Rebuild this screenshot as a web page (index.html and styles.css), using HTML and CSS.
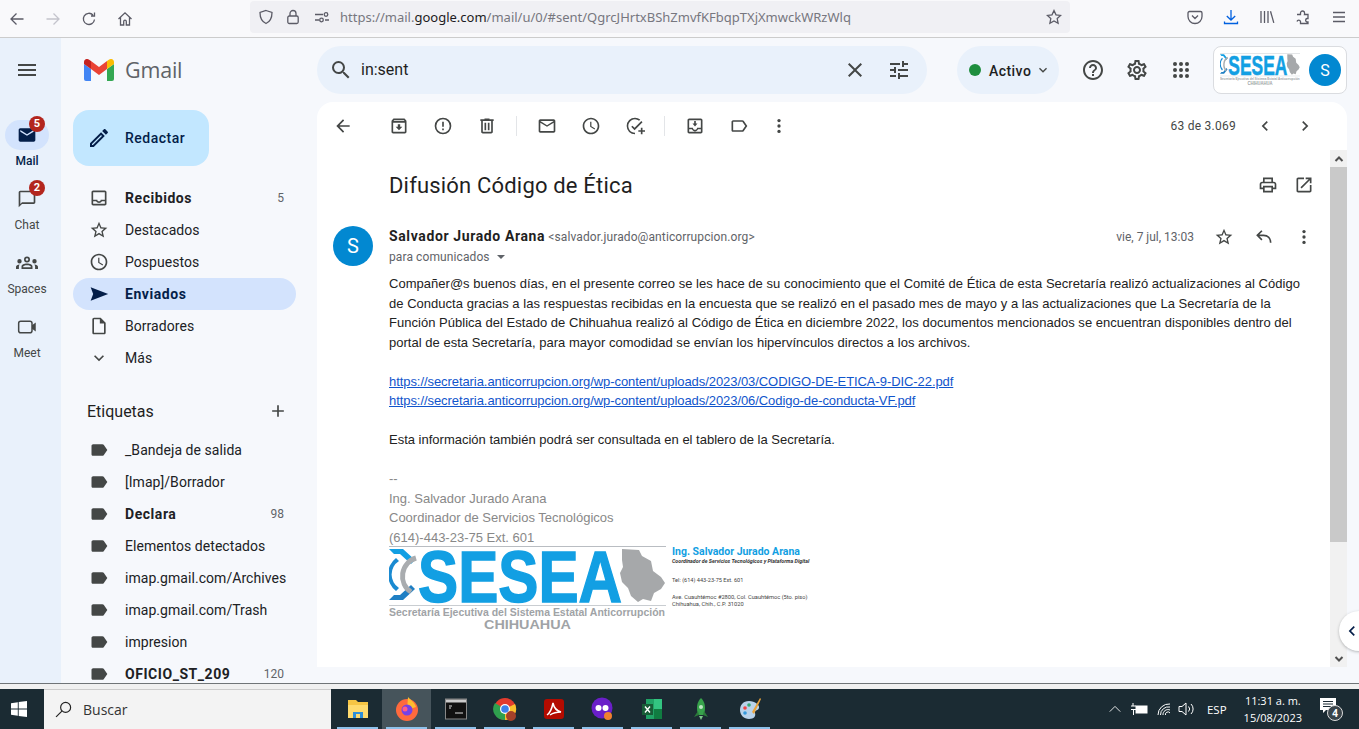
FILE: index.html
```html
<!DOCTYPE html>
<html lang="es">
<head>
<meta charset="utf-8">
<title>Difusión Código de Ética - Gmail</title>
<link rel="stylesheet" href="styles.css">
</head>
<body>
<svg class="defs" width="0" height="0">
  <symbol id="lab" viewBox="0 0 24 24"><path d="M17.63 5.84C17.27 5.33 16.67 5 16 5L5 5.01C3.9 5.01 3 5.9 3 7v10c0 1.1.9 1.99 2 1.99L16 19c.67 0 1.27-.33 1.63-.84L22 12l-4.37-6.16z"/></symbol>
  <symbol id="star" viewBox="0 0 24 24"><path d="M22 9.24l-7.19-.62L12 2 9.19 8.63 2 9.24l5.46 4.73L5.82 21 12 17.27 18.18 21l-1.63-7.03L22 9.24zM12 15.4l-3.76 2.27 1-4.28-3.32-2.88 4.38-.38L12 6.1l1.71 4.04 4.38.38-3.32 2.88 1 4.28L12 15.4z"/></symbol>
  <symbol id="dots" viewBox="0 0 24 24"><circle cx="12" cy="5.5" r="2"/><circle cx="12" cy="12" r="2"/><circle cx="12" cy="18.5" r="2"/></symbol>
  <symbol id="emblem" viewBox="0 0 277 88" preserveAspectRatio="none">
    <rect x="0" y="0" width="277" height="1" fill="#b9bdc2"/>
    <rect x="0" y="59" width="277" height="1" fill="#c9cdd1"/>
    <path d="M0 3h14l12 11-4 4L11 8H5z" fill="#129fe3"/>
    <path d="M0 54h14l12-11-4-4-11 10H5z" fill="#1f7fc4"/>
    <path d="M7 12a21 21 0 0 0 0 33l3-3a16 16 0 0 1 0-27z" fill="#1a8ad1"/>
    <path d="M27 12a19 19 0 0 0-5 34" fill="none" stroke="#a9acaf" stroke-width="5"/>
    <path d="M233 3l17 1 3 6 9 5 2 10 8 6 4 6-4 6-7 4-3 8-8-2-5 3-7-6-3-8-6-6-2-9 3-6-1-7z" fill="#a6a8aa"/>
  </symbol>
</svg>

<header class="browser">
  <div class="b-left">
    <svg class="b-ico" viewBox="0 0 16 16"><path d="M14.5 8H2M7.5 2.5 2 8l5.5 5.5"/></svg>
    <svg class="b-ico faint" viewBox="0 0 16 16"><path d="M1.5 8H14M8.5 2.5 14 8l-5.500 5.500"/></svg>
    <svg class="b-ico" viewBox="0 0 16 16"><path d="M13.500 8.500A5.600 5.600 0 1 1 12 4M13.500 1.500V5H10"/></svg>
    <svg class="b-ico" viewBox="0 0 16 16"><path d="M1.500 8 8 1.800 14.500 8M3.500 6.500V14h3.200v-3.500a1.300 1.300 0 0 1 2.600 0V14h3.200V6.500"/></svg>
  </div>
  <div class="urlbar">
    <svg class="b-ico u1" viewBox="0 0 16 16"><path d="M8 1.500 14 3.500c0 5-1.500 9-6 11-4.500-2-6-6-6-11z"/></svg>
    <svg class="b-ico u2" viewBox="0 0 16 16"><rect x="2.800" y="7" width="10.400" height="7.500" rx="1.500"/><path d="M5 7V4.500a3 3 0 0 1 6 0V7"/></svg>
    <svg class="b-ico u3" viewBox="0 0 16 16"><path d="M1 5.500h8M1 11h4M11 11h4"/><circle cx="12" cy="5.500" r="1.800"/><circle cx="7.500" cy="11" r="1.800"/></svg>
    <span class="url">https://mail.<b>google.com</b>/mail/u/0/#sent/QgrcJHrtxBShZmvfKFbqpTXjXmwckWRzWlq</span>
    <svg class="b-ico" viewBox="0 0 16 16"><path d="M8 1.500l2 4.300 4.600.6-3.400 3.200.9 4.700L8 12l-4.100 2.300.9-4.700L1.400 6.400 6 5.800z"/></svg>
  </div>
  <div class="b-right">
    <svg class="b-ico" viewBox="0 0 16 16"><path d="M2.500 2.500h11A1.500 1.500 0 0 1 15 4v3.500a7 7 0 0 1-14 0V4a1.500 1.500 0 0 1 1.500-1.500zM5 6.500l3 3 3-3"/></svg>
    <svg class="b-ico blue" viewBox="0 0 16 16"><path d="M8 1v10M3.800 7 8 11l4.200-4M1.500 12.500v2h13v-2"/></svg>
    <svg class="b-ico" viewBox="0 0 16 16"><path d="M2 2v12M5.500 2v12M9 2v12M11.500 2.200l3.300 11.700"/></svg>
    <svg class="b-ico" viewBox="0 0 16 16"><path d="M2 5.500h3.500V4a2 2 0 0 1 4 0 2 2 0 0 1 0 1.500H13v4h-1a1.800 1.800 0 0 0 0 3.500h1v1.500H5.500v-2a1.800 1.800 0 0 0-3.500 0"/></svg>
    <svg class="b-ico" viewBox="0 0 16 16"><path d="M2 3.500h12M2 8h12M2 12.500h12"/></svg>
  </div>
</header>

<div class="app">
  <nav class="rail">
    <div class="rail-menu"><svg class="ic i24" viewBox="0 0 24 24"><path d="M3 18h18v-2H3v2zm0-5h18v-2H3v2zm0-7v2h18V6H3z"/></svg></div>
    <div class="rail-item active">
      <div class="rail-ico"><svg class="ic navy i20" viewBox="0 0 24 24"><path d="M20 4H4c-1.100 0-2 .9-2 2v12c0 1.100.9 2 2 2h16c1.100 0 2-.9 2-2V6c0-1.100-.9-2-2-2zm0 4l-8 5-8-5V6l8 5 8-5v2z"/></svg><span class="badge">5</span></div>
      <span class="rail-text">Mail</span>
    </div>
    <div class="rail-item">
      <div class="rail-ico"><svg class="ic i20" viewBox="0 0 24 24"><path d="M20 2H4c-1.100 0-2 .9-2 2v18l4-4h14c1.100 0 2-.9 2-2V4c0-1.100-.9-2-2-2zm0 14H6l-2 2V4h16v12z"/></svg><span class="badge">2</span></div>
      <span class="rail-text">Chat</span>
    </div>
    <div class="rail-item">
      <div class="rail-ico"><svg class="ic i24" viewBox="0 0 24 24"><path d="M12 5.500a3 3 0 1 1 0 6 3 3 0 0 1 0-6zm0 1.700a1.300 1.300 0 1 0 0 2.600 1.300 1.300 0 0 0 0-2.600zM4.500 8a2.200 2.200 0 1 1 0 4.400 2.200 2.200 0 0 1 0-4.400zm15 0a2.200 2.200 0 1 1 0 4.400 2.200 2.200 0 0 1 0-4.400zM12 12.500c3 0 5.500 1.200 5.500 3V18h-11v-2.500c0-1.800 2.500-3 5.500-3zm0 1.700c-2.200 0-3.800.7-3.800 1.400v.7h7.600v-.7c0-.7-1.600-1.400-3.800-1.400zM1 18v-2.200c0-1.400 1.500-2.300 3.700-2.400-.5.600-.8 1.300-.8 2.100V18zm22 0h-2.900v-2.500c0-.8-.3-1.500-.8-2.100 2.200.1 3.700 1 3.700 2.400z"/></svg></div>
      <span class="rail-text">Spaces</span>
    </div>
    <div class="rail-item">
      <div class="rail-ico"><svg class="ic i20" viewBox="0 0 24 24"><rect class="meet-box" x="2" y="5" width="16" height="14" rx="2.500"/><path d="M18 10l4.500-3.500v11L18 14z"/></svg></div>
      <span class="rail-text">Meet</span>
    </div>
  </nav>

  <aside class="side">
    <div class="brand">
      <svg class="gm" viewBox="0 0 30 22"><path d="M2 22h5V10L0 5v15a2 2 0 0 0 2 2z" fill="#4285f4"/><path d="M23 22h5a2 2 0 0 0 2-2V5l-7 5z" fill="#34a853"/><path d="M23 2v8l7-5V3c0-2.500-2.800-3.900-4.800-2.400z" fill="#fbbc04"/><path d="M7 10V2l8 6 8-6v8l-8 6z" fill="#ea4335"/><path d="M0 3v2l7 5V2L4.800.6C2.800-.9 0 .5 0 3z" fill="#c5221f"/></svg>
      <span class="brand-name">Gmail</span>
    </div>
    <div class="compose">
      <svg class="ic ink i24" viewBox="0 0 24 24"><path d="M3 17.250V21h3.750L17.810 9.940l-3.750-3.750L3 17.250zM5.920 19H5v-.92l9.060-9.060.92.92L5.920 19zM20.710 5.630l-2.340-2.340c-.2-.2-.45-.29-.71-.29s-.51.1-.7.29l-1.830 1.830 3.750 3.750 1.830-1.830c.39-.39.39-1.020 0-1.410z"/></svg>
      <span>Redactar</span>
    </div>
    <ul class="nav">
      <li class="row strong"><svg class="ic i20" viewBox="0 0 24 24"><path d="M19 3H5c-1.100 0-2 .9-2 2v14c0 1.100.9 2 2 2h14c1.100 0 2-.9 2-2V5c0-1.100-.9-2-2-2zm0 16H5v-3h3.560c.69 1.190 1.970 2 3.450 2s2.750-.81 3.450-2H19v3zm0-5h-4.990c0 1.100-.9 2-2 2s-2-.9-2-2H5V5h14v9z"/></svg><span class="lbl">Recibidos</span><span class="cnt">5</span></li>
      <li class="row"><svg class="ic i20" viewBox="0 0 24 24"><use href="#star"/></svg><span class="lbl">Destacados</span></li>
      <li class="row"><svg class="ic i20" viewBox="0 0 24 24"><path d="M11.990 2C6.470 2 2 6.480 2 12s4.470 10 9.990 10C17.520 22 22 17.520 22 12S17.520 2 11.990 2zM12 20c-4.420 0-8-3.580-8-8s3.580-8 8-8 8 3.580 8 8-3.580 8-8 8zm.5-13H11v6l5.250 3.150.75-1.230-4.500-2.670z"/></svg><span class="lbl">Pospuestos</span></li>
      <li class="row sel"><svg class="ic navy i20" viewBox="0 0 24 24"><path d="M2 20l3-8-3-8 21 8z"/></svg><span class="lbl">Enviados</span></li>
      <li class="row"><svg class="ic i20" viewBox="0 0 24 24"><path d="M14 2H6c-1.100 0-2 .9-2 2v16c0 1.100.9 2 2 2h12c1.100 0 2-.9 2-2V8l-6-6zM6 20V4h7v5h5v11H6z"/></svg><span class="lbl">Borradores</span></li>
      <li class="row"><svg class="ic i20" viewBox="0 0 24 24"><path d="M16.590 8.590L12 13.170 7.410 8.590 6 10l6 6 6-6z"/></svg><span class="lbl">Más</span></li>
    </ul>
    <div class="tags-head"><span>Etiquetas</span><svg class="ic i20" viewBox="0 0 24 24"><path d="M19 13h-6v6h-2v-6H5v-2h6V5h2v6h6v2z"/></svg></div>
    <ul class="nav">
      <li class="row"><svg class="ic tag i20"><use href="#lab"/></svg><span class="lbl">_Bandeja de salida</span></li>
      <li class="row"><svg class="ic tag i20"><use href="#lab"/></svg><span class="lbl">[Imap]/Borrador</span></li>
      <li class="row strong"><svg class="ic tag i20"><use href="#lab"/></svg><span class="lbl">Declara</span><span class="cnt">98</span></li>
      <li class="row"><svg class="ic tag i20"><use href="#lab"/></svg><span class="lbl">Elementos detectados</span></li>
      <li class="row"><svg class="ic tag i20"><use href="#lab"/></svg><span class="lbl">imap.gmail.com/Archives</span></li>
      <li class="row"><svg class="ic tag i20"><use href="#lab"/></svg><span class="lbl">imap.gmail.com/Trash</span></li>
      <li class="row"><svg class="ic tag i20"><use href="#lab"/></svg><span class="lbl">impresion</span></li>
      <li class="row strong"><svg class="ic tag i20"><use href="#lab"/></svg><span class="lbl">OFICIO_ST_209</span><span class="cnt">120</span></li>
    </ul>
  </aside>

  <main class="main">
    <div class="top">
      <div class="search">
        <svg class="ic ink2 i24" viewBox="0 0 24 24"><path d="M15.500 14h-.79l-.28-.27A6.471 6.471 0 0 0 16 9.500 6.500 6.500 0 1 0 9.500 16c1.610 0 3.090-.59 4.230-1.570l.27.28v.79l5 4.990L20.490 19l-4.990-5zm-6 0C7.010 14 5 11.990 5 9.500S7.010 5 9.500 5 14 7.010 14 9.500 11.990 14 9.500 14z"/></svg>
        <span class="q">in:sent</span>
        <svg class="ic ink2 i24" viewBox="0 0 24 24"><path d="M19 6.410L17.590 5 12 10.590 6.410 5 5 6.410 10.590 12 5 17.590 6.410 19 12 13.410 17.590 19 19 17.590 13.410 12z"/></svg>
        <svg class="ic ink2 i24" viewBox="0 0 24 24"><path d="M3 17v2h6v-2H3zM3 5v2h10V5H3zm10 16v-2h8v-2h-8v-2h-2v6h2zM7 9v2H3v2h4v2h2V9H7zm14 4v-2H11v2h10zm-6-4h2V7h4V5h-4V3h-2v6z"/></svg>
      </div>
      <div class="status"><i class="dot"></i><span>Activo</span><svg class="ic i16" viewBox="0 0 24 24"><path d="M16.590 8.590L12 13.170 7.410 8.590 6 10l6 6 6-6z"/></svg></div>
      <div class="tools">
        <svg class="ic i24" viewBox="0 0 24 24"><path d="M11 18h2v-2h-2v2zm1-16C6.480 2 2 6.480 2 12s4.480 10 10 10 10-4.480 10-10S17.520 2 12 2zm0 18c-4.410 0-8-3.590-8-8s3.590-8 8-8 8 3.590 8 8-3.590 8-8 8zm0-14c-2.210 0-4 1.790-4 4h2c0-1.100.9-2 2-2s2 .9 2 2c0 2-3 1.750-3 5h2c0-2.250 3-2.500 3-5 0-2.210-1.790-4-4-4z"/></svg>
        <svg class="ic i24" viewBox="0 0 24 24"><path d="M19.430 12.980c.04-.32.07-.64.07-.98 0-.34-.03-.66-.07-.98l2.110-1.650c.19-.15.24-.42.12-.64l-2-3.460c-.09-.16-.26-.25-.44-.25-.06 0-.12.01-.17.03l-2.490 1c-.52-.4-1.080-.73-1.690-.98l-.38-2.650C14.460 2.180 14.250 2 14 2h-4c-.25 0-.46.18-.49.42l-.38 2.650c-.61.25-1.170.59-1.690.98l-2.490-1c-.06-.02-.12-.03-.18-.03-.17 0-.34.09-.43.25l-2 3.460c-.13.22-.07.49.12.64l2.110 1.650c-.04.32-.07.65-.07.98 0 .33.03.66.07.98l-2.110 1.650c-.19.15-.24.42-.12.64l2 3.460c.09.16.26.25.44.25.06 0 .12-.01.17-.03l2.490-1c.52.4 1.080.73 1.690.98l.38 2.650c.03.24.24.42.49.42h4c.25 0 .46-.18.49-.42l.38-2.650c.61-.25 1.170-.59 1.690-.98l2.490 1c.06.02.12.03.18.03.17 0 .34-.09.43-.25l2-3.460c.12-.22.07-.49-.12-.64l-2.110-1.650zm-1.980-1.710c.04.31.05.52.05.73 0 .21-.02.43-.05.73l-.14 1.130.89.7 1.080.84-.7 1.210-1.270-.51-1.040-.42-.9.68c-.43.32-.84.56-1.250.73l-1.060.43-.16 1.130-.2 1.350h-1.400l-.19-1.350-.16-1.130-1.060-.43c-.43-.18-.83-.41-1.230-.71l-.91-.7-1.060.43-1.270.51-.7-1.210 1.080-.84.89-.7-.14-1.130c-.03-.31-.05-.54-.05-.74s.02-.43.05-.73l.14-1.130-.89-.7-1.080-.84.7-1.210 1.270.51 1.040.42.9-.68c.43-.32.84-.56 1.250-.73l1.060-.43.16-1.130.2-1.350h1.390l.19 1.350.16 1.130 1.060.43c.43.18.83.41 1.230.71l.91.7 1.060-.43 1.270-.51.7 1.210-1.070.85-.89.7.14 1.130zM12 8c-2.210 0-4 1.790-4 4s1.790 4 4 4 4-1.790 4-4-1.790-4-4-4zm0 6c-1.100 0-2-.9-2-2s.9-2 2-2 2 .9 2 2-.9 2-2 2z"/></svg>
        <svg class="ic i24" viewBox="0 0 24 24"><circle cx="6" cy="6" r="2"/><circle cx="12" cy="6" r="2"/><circle cx="18" cy="6" r="2"/><circle cx="6" cy="12" r="2"/><circle cx="12" cy="12" r="2"/><circle cx="18" cy="12" r="2"/><circle cx="6" cy="18" r="2"/><circle cx="12" cy="18" r="2"/><circle cx="18" cy="18" r="2"/></svg>
      </div>
      <div class="account">
        <svg class="acc-logo" viewBox="0 0 277 88" preserveAspectRatio="none">
          <use href="#emblem"/>
          <text x="29" y="56" class="lg-word" textLength="204" lengthAdjust="spacingAndGlyphs">SESEA</text>
          <text x="0" y="70" class="lg-sub" textLength="276" lengthAdjust="spacingAndGlyphs">Secretaría Ejecutiva del Sistema Estatal Anticorrupción</text>
          <text x="95" y="83" class="lg-city" textLength="87" lengthAdjust="spacingAndGlyphs">CHIHUAHUA</text>
        </svg>
        <span class="avatar small">S</span>
      </div>
    </div>

    <section class="card">
      <div class="toolbar">
        <svg class="ic i20 tb-back" viewBox="0 0 24 24"><path d="M20 11H7.830l5.590-5.590L12 4l-8 8 8 8 1.410-1.410L7.830 13H20v-2z"/></svg>
        <div class="tb-group">
          <svg class="ic i20" viewBox="0 0 24 24"><path d="M20.540 5.230l-1.390-1.680C18.880 3.210 18.470 3 18 3H6c-.47 0-.88.21-1.160.55L3.460 5.230C3.170 5.570 3 6.020 3 6.500V19c0 1.100.9 2 2 2h14c1.100 0 2-.9 2-2V6.500c0-.48-.17-.93-.46-1.270zM6.240 5h11.520l.83 1H5.420l.82-1zM5 19V8h14v11H5zm8.450-9h-2.900v3H8l4 4 4-4h-2.550z"/></svg>
          <svg class="ic i20" viewBox="0 0 24 24"><path d="M12 2a10 10 0 1 1 0 20 10 10 0 0 1 0-20zm0 2a8 8 0 1 0 0 16 8 8 0 0 0 0-16zm-1 3h2v6h-2zm0 8h2v2h-2z"/></svg>
          <svg class="ic i20" viewBox="0 0 24 24"><path d="M15 4V3H9v1H4v2h1v13c0 1.100.9 2 2 2h10c1.100 0 2-.9 2-2V6h1V4h-5zm2 15H7V6h10v13zM9 8h2v9H9zm4 0h2v9h-2z"/></svg>
        </div>
        <i class="tb-sep"></i>
        <div class="tb-group">
          <svg class="ic i20" viewBox="0 0 24 24"><path d="M20 4H4c-1.100 0-2 .9-2 2v12c0 1.100.9 2 2 2h16c1.100 0 2-.9 2-2V6c0-1.100-.9-2-2-2zm0 14H4V8l8 5 8-5v10zm-8-7L4 6h16l-8 5z"/></svg>
          <svg class="ic i20" viewBox="0 0 24 24"><path d="M11.990 2C6.470 2 2 6.480 2 12s4.470 10 9.990 10C17.520 22 22 17.520 22 12S17.520 2 11.990 2zM12 20c-4.420 0-8-3.580-8-8s3.580-8 8-8 8 3.580 8 8-3.580 8-8 8zm.5-13H11v6l5.250 3.150.75-1.230-4.500-2.670z"/></svg>
          <svg class="ic i20" viewBox="0 0 24 24"><path d="M21 7.500l-9.500 9.500-4-4 1.400-1.400 2.600 2.600 8.100-8.100zM12 2a10 10 0 0 1 6.300 2.200l-1.400 1.500A8 8 0 1 0 12 20v2a10 10 0 0 1 0-20zm7 12h2v3h3v2h-3v3h-2v-3h-3v-2h3z"/></svg>
        </div>
        <i class="tb-sep"></i>
        <div class="tb-group">
          <svg class="ic i20" viewBox="0 0 24 24"><path d="M19 3H5c-1.100 0-2 .9-2 2v14c0 1.100.9 2 2 2h14c1.100 0 2-.9 2-2V5c0-1.100-.9-2-2-2zm0 2v9h-4.500c0 1.400-1.100 2.500-2.500 2.500S9.500 15.400 9.500 14H5V5zM5 19v-3h3.300c.7 1.200 2.100 2.500 3.700 2.500s3-1.300 3.700-2.500H19v3zM11 6h2v3h2l-3 3.500L9 9h2z"/></svg>
          <svg class="ic i20" viewBox="0 0 24 24"><path d="M17.630 5.840C17.270 5.330 16.670 5 16 5L5 5.010C3.900 5.010 3 5.900 3 7v10c0 1.100.9 1.990 2 1.990L16 19c.67 0 1.270-.33 1.630-.84L22 12l-4.370-6.160zM16 17H5V7h11l3.550 5L16 17z"/></svg>
          <svg class="ic i20 tb-more"><use href="#dots"/></svg>
        </div>
        <span class="pager">63 de 3.069</span>
        <svg class="ic i20" viewBox="0 0 24 24"><path d="M15.410 7.410L14 6l-6 6 6 6 1.410-1.410L10.830 12z"/></svg>
        <svg class="ic i20 tb-next" viewBox="0 0 24 24"><path d="M10 6L8.590 7.410 13.170 12l-4.580 4.590L10 18l6-6z"/></svg>
      </div>

      <div class="body-wrap">
        <div class="thread">
          <div class="subject-row">
            <h1 class="subject">Difusión Código de Ética</h1>
            <svg class="ic i20" viewBox="0 0 24 24"><path d="M19 8h-1V3H6v5H5c-1.660 0-3 1.340-3 3v6h4v4h12v-4h4v-6c0-1.660-1.340-3-3-3zM8 5h8v3H8V5zm8 12v2H8v-4h8v2zm2-2v-2H6v2H4v-4c0-.55.45-1 1-1h14c.55 0 1 .45 1 1v4h-2z"/></svg>
            <svg class="ic i20" viewBox="0 0 24 24"><path d="M19 19H5V5h7V3H5c-1.110 0-2 .9-2 2v14c0 1.100.89 2 2 2h14c1.100 0 2-.9 2-2v-7h-2v7zM14 3v2h3.590l-9.830 9.830 1.410 1.410L19 6.410V10h2V3h-7z"/></svg>
          </div>
          <div class="msg">
            <span class="avatar">S</span>
            <div class="msg-col">
              <div class="msg-head">
                <div class="who">
                  <div class="from"><b>Salvador Jurado Arana</b> <span>&lt;salvador.jurado@anticorrupcion.org&gt;</span></div>
                  <div class="to">para comunicados <i class="caret"></i></div>
                </div>
                <span class="date">vie, 7 jul, 13:03</span>
                <svg class="ic i20" viewBox="0 0 24 24"><use href="#star"/></svg>
                <svg class="ic i20 reply" viewBox="0 0 24 24"><path d="M9.500 4.500 4 10l5.500 5.500M4 10h7.500c5 0 8.500 3.500 8.500 9"/></svg>
                <svg class="ic i20"><use href="#dots"/></svg>
              </div>
              <div class="text">
                <p class="para">Compañer@s buenos días, en el presente correo se les hace de su conocimiento que el Comité de Ética de esta Secretaría realizó actualizaciones al Código<br>de Conducta gracias a las respuestas recibidas en la encuesta que se realizó en el pasado mes de mayo y a las actualizaciones que La Secretaría de la<br>Función Pública del Estado de Chihuahua realizó al Código de Ética en diciembre 2022, los documentos mencionados se encuentran disponibles dentro del<br>portal de esta Secretaría, para mayor comodidad se envían los hipervínculos directos a los archivos.</p>
                <p class="links"><a href="#">https://secretaria.anticorrupcion.org/wp-content/uploads/2023/03/CODIGO-DE-ETICA-9-DIC-22.pdf</a><br><a href="#">https://secretaria.anticorrupcion.org/wp-content/uploads/2023/06/Codigo-de-conducta-VF.pdf</a></p>
                <p>Esta información también podrá ser consultada en el tablero de la Secretaría.</p>
                <p class="sig">--<br>Ing. Salvador Jurado Arana<br>Coordinador de Servicios Tecnológicos<br>(614)-443-23-75 Ext. 601</p>
                <div class="sig-block">
                  <svg class="sig-logo" viewBox="0 0 277 88" preserveAspectRatio="none">
                    <use href="#emblem"/>
                    <text x="29" y="56" class="lg-word" textLength="204" lengthAdjust="spacingAndGlyphs">SESEA</text>
                    <text x="0" y="70" class="lg-sub" textLength="276" lengthAdjust="spacingAndGlyphs">Secretaría Ejecutiva del Sistema Estatal Anticorrupción</text>
                    <text x="95" y="83" class="lg-city" textLength="87" lengthAdjust="spacingAndGlyphs">CHIHUAHUA</text>
                  </svg>
                  <div class="sig-info">
                    <div class="si-name">Ing. Salvador Jurado Arana</div>
                    <div class="si-role">Coordinador de Servicios Tecnológicos y Plataforma Digital</div>
                    <div class="si-tel">Tel: (614) 443-23-75 Ext. 601</div>
                    <div class="si-addr">Ave. Cuauhtémoc #2800, Col. Cuauhtémoc (5to. piso)<br>Chihuahua, Chih., C.P. 31020</div>
                  </div>
                </div>
              </div>
            </div>
          </div>
        </div>
        <div class="scroll">
          <div class="sc-btn"><svg viewBox="0 0 12 12"><path d="M2.500 8 6 4.500 9.500 8"/></svg></div>
          <div class="sc-thumb"></div>
          <div class="sc-track"></div>
          <div class="sc-btn"><svg viewBox="0 0 12 12"><path d="M2.500 4 6 7.500 9.500 4"/></svg></div>
        </div>
      </div>
    </section>
  </main>
  <div class="expand"><svg class="ic ink i20" viewBox="0 0 24 24"><path d="M15.410 7.410L14 6l-6 6 6 6 1.410-1.410L10.830 12z"/></svg></div>
</div>

<div class="strip"></div>

<footer class="taskbar">
  <div class="start"><svg class="win" viewBox="0 0 16 16"><path d="M0 2.200 6.800 1.200V7.500H0zM7.700 1.100 16 0v7.500H7.700zM0 8.400h6.800v6.400L0 13.800zM7.700 8.400H16V16l-8.300-1.100z"/></svg></div>
  <div class="tsearch">
    <svg class="ts-ico" viewBox="0 0 16 16"><circle cx="10" cy="6" r="4.700"/><path d="M6.500 9.500 1 15"/></svg>
    <span>Buscar</span>
  </div>
  <div class="apps">
    <div class="app-i run"><svg viewBox="0 0 24 24"><path d="M2 3h8l2 2h10v16H2z" fill="#f6c544"/><rect x="2" y="8" width="20" height="13" fill="#ffdb6e"/><rect x="7" y="15" width="10" height="6" fill="#2f8fd8"/><rect x="10" y="17" width="4" height="4" fill="#ffdb6e"/></svg></div>
    <div class="app-i run cur"><svg viewBox="0 0 24 24"><circle cx="12" cy="13" r="11" fill="#ff6a3d"/><path d="M13 0c3 3 7 6 8 10l-9 3z" fill="#ffbd2e"/><circle cx="12" cy="13" r="5.500" fill="#7542e5"/><circle cx="10" cy="12" r="2.500" fill="#ff5d8a"/></svg></div>
    <div class="app-i run"><svg viewBox="0 0 24 24"><rect x="1.500" y="2" width="21" height="20" fill="#111" stroke="#888"/><rect x="2" y="2.500" width="20" height="3" fill="#ccc"/><path d="M5 9h3M5 11h2M11 16h8" stroke="#ddd" fill="none"/></svg></div>
    <div class="app-i run"><svg viewBox="0 0 24 24"><circle cx="12" cy="12" r="11" fill="#e33b2e"/><path d="M12 12 22 7A11 11 0 0 1 12 23z" fill="#fbc02d"/><path d="M12 12 12 23A11 11 0 0 1 2 6z" fill="#2fa04e"/><circle cx="12" cy="12" r="5" fill="#fff"/><circle cx="12" cy="12" r="3.800" fill="#3f81ec"/><circle cx="18" cy="19" r="5" fill="#a5412a"/></svg></div>
    <div class="app-i run"><svg viewBox="0 0 24 24"><rect x="2" y="2" width="20" height="20" rx="3" fill="#b30b00"/><path d="M5 18c3-2 5-7 6-12 1 5 4 8 8 9-4 0-8 1-11 3" fill="none" stroke="#fff" stroke-width="1.500"/></svg></div>
    <div class="app-i run"><svg viewBox="0 0 24 24"><circle cx="11" cy="11" r="10.500" fill="#6a1fc9"/><circle cx="7.500" cy="11" r="3" fill="#fff"/><circle cx="14.500" cy="11" r="3" fill="#fff"/><circle cx="17" cy="19" r="4" fill="#f08030"/></svg></div>
    <div class="app-i run"><svg viewBox="0 0 24 24"><rect x="6" y="2" width="16" height="20" fill="#21a366"/><rect x="14" y="2" width="8" height="10" fill="#33c481"/><rect x="14" y="12" width="8" height="10" fill="#107c41"/><rect x="2" y="7" width="11" height="11" fill="#185c37"/><path d="M5 9.500l5 6M10 9.500l-5 6" stroke="#fff" fill="none" stroke-width="1.400"/></svg></div>
    <div class="app-i run"><svg viewBox="0 0 24 24"><path d="M12 1c4 4 5 9 3 17H9C7 10 8 5 12 1z" fill="#37a24b"/><circle cx="12" cy="10" r="2" fill="#bfe5c4"/><path d="M9 14l-4 6 5-2zM15 14l4 6-5-2z" fill="#2c7a3b"/><path d="M10 19h4l-2 4z" fill="#7ecb8a"/></svg></div>
    <div class="app-i run"><svg viewBox="0 0 24 24"><path d="M11 4C5 4 2 8 2 13s4 9 9 9 7-3 6-6 3-2 4-5-4-7-10-7z" fill="#b9d2ea"/><circle cx="7" cy="11" r="1.800" fill="#e44"/><circle cx="11" cy="8" r="1.800" fill="#3a7"/><circle cx="7" cy="16" r="1.800" fill="#39d"/><path d="M22 1l-8 14 2 2 7-15z" fill="#e9a23b"/></svg></div>
  </div>
  <div class="tray">
    <svg class="tr chev" viewBox="0 0 16 16"><path d="M2 11 8 5l6 6"/></svg>
    <svg class="tr batt" viewBox="0 0 18 16"><rect x="6" y="5" width="11" height="7" fill="#fff"/><path d="M1 5h5M3 2v3M1 8.500h5M3.500 8v6"/></svg>
    <svg class="tr wifi" viewBox="0 0 16 16"><path d="M2 14a11 11 0 0 1 12-11M4.500 14A8 8 0 0 1 14 6M7 14a5 5 0 0 1 7-5M9.500 14A2.500 2.500 0 0 1 14 12"/></svg>
    <svg class="tr vol" viewBox="0 0 18 16"><path d="M1 5.500h3L8 2v12L4 10.500H1zM10.500 5.500a3.500 3.500 0 0 1 0 5M13 3a7 7 0 0 1 0 10"/></svg>
    <span class="lang">ESP</span>
    <div class="clock"><span>11:31 a. m.</span><span>15/08/2023</span></div>
    <div class="notif">
      <svg class="nt" viewBox="0 0 16 16"><path d="M0 0h16v12H6l-3 3v-3H0z" fill="#fff"/><path d="M3 3.500h10M3 6h10M3 8.500h10" stroke="#1b2a33"/></svg>
      <span class="nt-badge">4</span>
    </div>
  </div>
</footer>
</body>
</html>
```
FILE: styles.css
```css
* { box-sizing: border-box; }
html, body { margin: 0; height: 100%; }
body {
  width: 1359px; height: 729px; overflow: hidden;
  display: flex; flex-direction: column;
  font-family: Roboto, "Liberation Sans", sans-serif;
  color: #1f1f1f; background: #f6f8fc;
}
.defs { position: absolute; }
ul { list-style: none; margin: 0; padding: 0; }
p { margin: 0; }

.ic { fill: #444746; flex: none; display: block; }
.i16 { width: 16px; height: 16px; }
.i20 { width: 20px; height: 20px; }
.i24 { width: 24px; height: 24px; }
.navy { fill: #041e49; }
.ink { fill: #041e49; }
.ink2 { fill: #444746; }
.reply { fill: none; stroke: #444746; stroke-width: 2; }
.meet-box { fill: none; stroke: #444746; stroke-width: 1.800; }

/* Browser chrome */
.browser {
  flex: none; height: 38px; display: flex; align-items: flex-start;
  background: #f9f9fb; border-bottom: 1px solid #ccc;
}
.b-ico { width: 16px; height: 16px; fill: none; stroke: #5b5b66; stroke-width: 1.300; flex: none; }
.b-ico.faint { stroke: #c4c4cc; }
.b-ico.blue { stroke: #0060df; }
.b-left { width: 250px; height: 37px; display: flex; align-items: center; gap: 20px; padding-left: 9px; }
.urlbar {
  width: 820px; height: 32px; margin-top: 1px;
  display: flex; align-items: center; padding: 0 8px;
  background: #f0f0f4; border-radius: 4px;
}
.u1 { margin-left: 0; }
.u2 { margin-left: 11px; }
.u3 { margin-left: 13px; }
.url { flex: 1; margin-left: 10px; font: 13px "Noto Sans", sans-serif; color: #77777f; white-space: nowrap; }
.url b { font-weight: 400; color: #1c1b22; }
.b-right { flex: 1; height: 33px; display: flex; align-items: center; justify-content: flex-end; gap: 20px; padding-right: 12px; }

/* App */
.app { flex: none; height: 645px; display: flex; overflow: hidden; position: relative; }
.rail { flex: none; width: 61px; padding-right: 7px; background: #e9f1fb; display: flex; flex-direction: column; align-items: center; }
.rail-menu { height: 64px; padding-top: 20px; }
.rail-item { height: 64px; display: flex; flex-direction: column; align-items: center; }
.rail-menu + .rail-item { margin-top: 18px; }
.rail-ico { position: relative; width: 44px; height: 30px; display: flex; align-items: center; justify-content: center; border-radius: 15px; }
.active .rail-ico { background: #d3e3fd; }
.rail-text { margin-top: 3px; font-size: 12px; line-height: 16px; color: #444746; }
.active .rail-text { color: #041e49; font-weight: 500; }
.badge {
  position: absolute; top: -4px; left: 24px; width: 16px; height: 16px; border-radius: 50%;
  background: #b3261e; color: #fff; font-size: 11px; font-weight: 700; line-height: 16px; text-align: center;
}

.side { flex: none; width: 256px; padding-left: 12px; overflow: hidden; }
.brand { height: 40px; margin-top: 12px; display: flex; align-items: center; padding-left: 11px; gap: 11px; }
.gm { width: 30px; height: 22px; flex: none; }
.brand-name { font: 21.500px/1 "Open Sans", sans-serif; color: #5f6368; letter-spacing: -.2px; }
.compose {
  width: 136px; height: 56px; margin-top: 20px; border-radius: 16px; background: #c2e7ff;
  display: flex; align-items: center; gap: 14px; padding-left: 14px;
  font-size: 14px; font-weight: 500; color: #041e49; letter-spacing: .5px;
}
.nav { width: 223px; }
.side > .nav:first-of-type { margin-top: 16px; }
.row { height: 32px; display: flex; align-items: center; padding: 0 12px 0 16px; border-radius: 16px; font-size: 14px; color: #202124; letter-spacing: .05px; }
.row .lbl { flex: 1; margin-left: 16px; white-space: nowrap; }
.row .cnt { font-size: 12px; color: #5f6368; font-weight: 400; letter-spacing: 0; }
.strong .lbl { font-weight: 700; letter-spacing: .55px; }
.sel { background: #d3e3fd; }
.sel .lbl { font-weight: 700; color: #041e49; letter-spacing: .55px; }
.tag { fill: #444746; }
.tags-head {
  width: 223px; height: 40px; margin-top: 17px; margin-bottom: 3px;
  display: flex; align-items: center; justify-content: space-between;
  padding: 0 8px 0 14px; font-size: 16px; color: #1f1f1f;
}

.main { flex: 1; min-width: 0; display: flex; flex-direction: column; padding-right: 12px; }
.top { flex: none; height: 64px; display: flex; align-items: flex-start; padding-top: 8px; }
.search {
  width: 610px; height: 48px; border-radius: 24px; background: #e9f1fb;
  display: flex; align-items: center; padding: 0 16px 0 12px;
}
.q { flex: 1; margin-left: 8px; margin-top: -2px; font-size: 16px; color: #1f1f1f; }
.search .ic + .ic { margin-left: 20px; }
.status {
  width: 102px; height: 48px; margin-left: 30px; border-radius: 24px; background: #e9f1fb;
  display: flex; align-items: center; padding-left: 12px; font-size: 14px; font-weight: 500; color: #1f1f1f; letter-spacing: .45px;
}
.status span { margin-left: 8px; margin-top: 2px; }
.status .ic { margin-left: 4px; }
.dot { width: 12px; height: 12px; border-radius: 50%; background: #1e8e3e; }
.tools { width: 154px; height: 48px; display: flex; align-items: center; gap: 20px; padding-left: 22px; }
.account {
  width: 134px; height: 48px; display: flex; align-items: center; justify-content: space-between;
  padding: 0 5px 0 6px; background: #fff; border: 1px solid #dadce0; border-radius: 8px;
}
.acc-logo { width: 80px; height: 34px; }
.avatar {
  width: 40px; height: 40px; flex: none; border-radius: 50%; background: #0288d1; color: #fff;
  display: flex; align-items: center; justify-content: center; font-size: 20px;
}
.avatar.small { width: 32px; height: 32px; font-size: 16px; }

.card { flex: none; height: 565px; background: #fff; border-radius: 16px 16px 0 0; display: flex; flex-direction: column; overflow: hidden; }
.toolbar { flex: none; height: 48px; display: flex; align-items: center; padding-left: 16px; }
.tb-group { display: flex; gap: 24px; }
.tb-back { margin-right: 36px; }
.tb-sep { width: 1px; height: 20px; background: #e3e5e8; margin: 0 20px 0 19px; }
.pager { margin-left: auto; font-size: 12px; color: #444746; margin-right: 19px; letter-spacing: .25px; }
.tb-next { margin-left: 20px; margin-right: 32px; }
.tb-group .tb-more { margin-left: -4px; }

.body-wrap { flex: 1; min-height: 0; display: flex; }
.thread { flex: 1; min-width: 0; overflow: hidden; }
.subject-row { height: 48px; margin-top: 11px; display: flex; align-items: center; padding-left: 72px; padding-right: 16px; gap: 16px; }
.subject { flex: 1; margin: 0 0 -2px; font-size: 22px; font-weight: 400; color: #1f1f1f; line-height: 28px; letter-spacing: .18px; }
.msg { display: flex; padding-left: 16px; margin-top: 17px; }
.msg-col { flex: 1; margin-left: 16px; min-width: 0; }
.msg-head { height: 40px; display: flex; align-items: flex-start; padding-right: 16px; }
.msg-head .ic { margin-left: 20px; margin-top: 1px; }
.who { flex: 1; }
.from { font-size: 12px; line-height: 20px; color: #5f6368; letter-spacing: .11px; }
.from b { font-size: 14px; color: #1f1f1f; letter-spacing: .62px; }
.to { font-size: 12px; line-height: 20px; color: #5f6368; display: flex; align-items: center; gap: 6px; letter-spacing: .1px; }
.caret { width: 0; height: 0; border: 4px solid transparent; border-top: 4px solid #5f6368; border-bottom: 0; margin-left: 1px; }
.date { font-size: 12px; line-height: 20px; color: #5f6368; margin-top: 1px; }
.text { margin-top: 8px; font: 13px/19.500px "Liberation Sans", sans-serif; color: #222; white-space: nowrap; }
.text p + p { margin-top: 19.500px; }
.para { letter-spacing: .025px; }
.links { letter-spacing: -.07px; }
.text a { color: #1155cc; }
.sig { color: #888; }
.sig-block { display: flex; margin-top: -1px; }
.sig-logo { width: 277px; height: 88px; flex: none; }
.lg-word { font: 700 73px "Liberation Sans", sans-serif; fill: #129fe3; stroke: #129fe3; stroke-width: 1.500px; }
.lg-sub { font: 700 10.500px "Liberation Sans", sans-serif; fill: #a0a3a6; }
.lg-city { font: 700 13px "Liberation Sans", sans-serif; fill: #a0a3a6; }
.sig-info { margin: -1px 0 0 6px; font-family: Roboto, sans-serif; color: #444; }
.si-name { font-size: 10.500px; line-height: 13px; font-weight: 700; color: #129fe3; }
.si-role { font-size: 5.300px; line-height: 7px; font-weight: 700; font-style: italic; color: #333; }
.si-tel { font-size: 5.600px; line-height: 7px; margin-top: 12px; }
.si-addr { font-size: 5.700px; line-height: 7px; margin-top: 10px; }

.scroll { flex: none; width: 17px; display: flex; flex-direction: column; background: #f1f1f1; }
.sc-btn { height: 17px; display: flex; align-items: center; justify-content: center; }
.sc-btn svg { width: 12px; height: 12px; fill: none; stroke: #505050; stroke-width: 2; }
.sc-thumb { height: 375px; background: #c9c9c9; }
.sc-track { flex: 1; }

.expand {
  position: absolute; right: -20px; top: 573px; width: 40px; height: 40px; border-radius: 50%;
  background: #fff; box-shadow: 0 1px 3px rgba(60,64,67,.35); display: flex; align-items: center; padding-left: 3px;
}

.strip { flex: none; height: 6px; background: #f0f0f0; border-top: 1px solid #6f7477; }

/* Taskbar */
.taskbar { flex: none; height: 40px; display: flex; background: #1b2b33; color: #fff; }
.start { width: 44px; display: flex; align-items: center; justify-content: center; padding-right: 6px; }
.win { width: 16px; height: 16px; fill: #fff; }
.tsearch { width: 287px; display: flex; align-items: center; gap: 11px; padding-left: 11px; background: #f3f3f3; color: #333; font-size: 14px; font-family: "Open Sans", sans-serif; border-top: 1px solid #ccc; }
.ts-ico { width: 17px; height: 17px; fill: none; stroke: #222; stroke-width: 1.100; }
.apps { display: flex; padding-left: 2px; }
.app-i { width: 49px; display: flex; align-items: center; justify-content: center; position: relative; }
.app-i svg { width: 24px; height: 24px; }
.run::after { content: ""; position: absolute; left: 4px; right: 4px; bottom: 0; height: 2px; background: #8ec1ea; }
.cur { background: #46545b; }
.tray { flex: 1; display: flex; align-items: center; justify-content: flex-end; padding-right: 15px; }
.tr { fill: none; stroke: #fff; stroke-width: 1; flex: none; }
.chev { width: 14px; height: 14px; margin-right: 8px; }
.batt { width: 18px; height: 16px; margin-right: 8px; }
.wifi { width: 16px; height: 16px; margin-right: 6px; }
.vol { width: 18px; height: 16px; margin-right: 11px; }
.lang { font: 11.500px "Open Sans", sans-serif; margin-right: 17px; }
.clock { display: flex; flex-direction: column; align-items: center; font: 11px/17px "Open Sans", sans-serif; margin-right: 18px; }
.notif { position: relative; width: 24px; height: 24px; }
.nt { width: 16px; height: 16px; display: block; margin-top: 1px; }
.nt-badge {
  position: absolute; left: 7px; top: 8px; width: 16px; height: 16px; border-radius: 50%;
  background: #3a444a; border: 1px solid #ddd; color: #fff; font: 700 10px/14px "Open Sans", sans-serif; text-align: center;
}
```
